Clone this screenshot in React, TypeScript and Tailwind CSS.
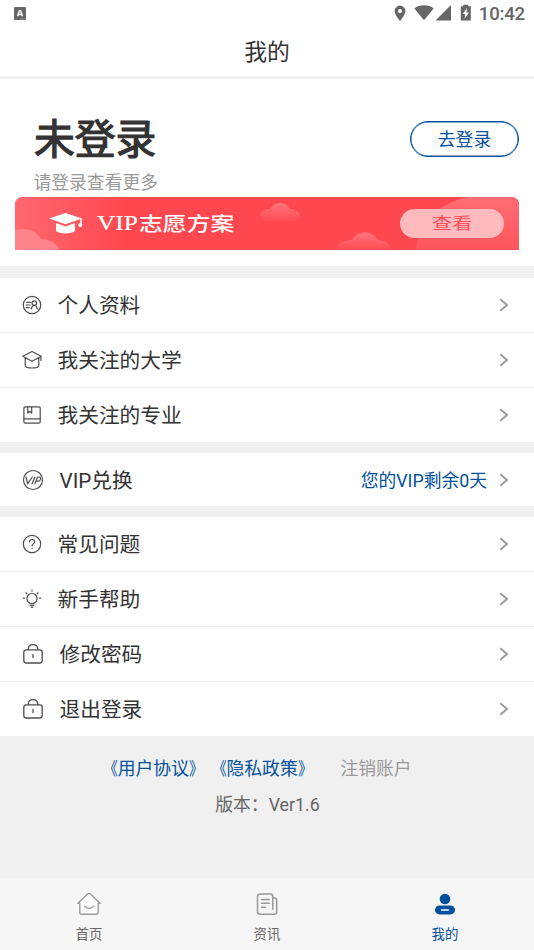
import type { ReactNode } from 'react';

const iconProps = {
  fill: 'none',
  stroke: '#4d4d4d',
  strokeWidth: 1.2,
  strokeLinecap: 'round' as const,
  strokeLinejoin: 'round' as const,
};

function ProfileIcon() {
  return (
    <svg width="20" height="20" viewBox="0 0 20 20" {...iconProps}>
      <circle cx="10" cy="10" r="8.7" />
      <path d="M4.8 7.4h3.8M4.2 10h3.8M4.2 12.6h3M9.4 13.8c.2-2.200 1.300-3.300 2.900-3.300s2.700 1.100 2.900 3.300" />
      <circle cx="12.300" cy="8.100" r="2.300" />
    </svg>
  );
}

function CollegeIcon() {
  return (
    <svg width="20" height="20" viewBox="0 0 20 20" {...iconProps}>
      <path d="M.8 6.300 10 1.500l9.200 4.800L10 11.200zM3.200 8v7.200c0 1.500 3 2.800 6.800 2.800s6.800-1.300 6.800-2.800V8M18.900 6.500v4" />
    </svg>
  );
}

function MajorIcon() {
  return (
    <svg width="20" height="20" viewBox="0 0 20 20" {...iconProps}>
      <rect x="1.900" y="1.800" width="16.300" height="16.300" rx="1.200" />
      <path d="M2 13.900h16M5.700 2v6l2-1.700 2 1.700V2" />
    </svg>
  );
}

function VipIcon() {
  return (
    <svg width="22" height="22" viewBox="0 0 22 22" {...iconProps}>
      <circle cx="11" cy="11" r="9.500" />
      <path d="m4 8 1.600 6.800L10.300 8M12.800 8l-2.700 6.800M12.900 14.800 15.600 8h1.500c2.500 0 1.700 4.200-.9 4.200h-2" />
    </svg>
  );
}

function QuestionIcon() {
  return (
    <svg width="20" height="20" viewBox="0 0 20 20" {...iconProps}>
      <circle cx="10" cy="10" r="8.700" />
      <path d="M7.500 8c0-1.500 1.100-2.500 2.600-2.500s2.500 1 2.500 2.300c0 1.800-2.500 1.900-2.500 4M10.100 14v.3" />
    </svg>
  );
}

function BulbIcon() {
  return (
    <svg width="20" height="20" viewBox="0 0 20 20" {...iconProps}>
      <circle cx="10" cy="9.600" r="5.100" />
      <path d="M8 16.300h4M9.300 18.300h1.400M10 1.200v.9M1.300 9.200h1.100M17.600 9.200h1.100M3.900 3.800l.8.7M16.100 3.800l-.8.7" />
    </svg>
  );
}

function LockIcon() {
  return (
    <svg width="22" height="22" viewBox="0 0 22 22" {...iconProps} strokeWidth={1.3}>
      <rect x="1.800" y="6.800" width="18.400" height="13.200" rx="2.500" />
      <path d="M6.200 6.600C6.200 3.600 8.300 1.700 11 1.700s4.800 1.900 4.800 4.900M11 11.400v3.200" />
    </svg>
  );
}

function Chevron() {
  return (
    <svg className="shrink-0" width="10" height="14" viewBox="0 0 10 14" fill="none" stroke="#9a9a9a" strokeWidth="1.900">
      <path d="m1.300 1.300 6.700 5.700-6.700 5.700" />
    </svg>
  );
}

type RowProps = {
  icon: ReactNode;
  label: string;
  wide?: boolean;
  extra?: string;
};

function Row({ icon, label, wide, extra }: RowProps) {
  return (
    <div className="box-content flex h-[54px] items-center pr-[25px] pl-[22px]">
      <span className={wide ? 'w-[37.500px]' : 'w-[35.500px]'}>{icon}</span>
      <span className="flex-1 pt-[2px] text-[20.700px] leading-[30px] text-[#333]">{label}</span>
      {extra && <span className="mr-[12px] pt-[2px] text-[17.800px] text-[#00509e]">{extra}</span>}
      <Chevron />
    </div>
  );
}

function StatusBar() {
  return (
    <div className="flex h-[27px] items-center pr-[9px] pl-[14px] text-[#666]">
      <svg width="12" height="13" viewBox="0 0 12 13">
        <rect width="12" height="13" rx="1" fill="#666" />
        <path d="M3.500 9.300 5.400 3.700h1.200l1.900 5.600M4.300 7.500h3.400" fill="none" stroke="#fff" strokeWidth="1.400" />
        <path d="M6.500 11.900h4.500" stroke="#bbb" strokeWidth=".8" strokeDasharray="1 .6" />
      </svg>
      <div className="flex-1" />
      <svg className="mb-px" width="80" height="18" viewBox="0 0 80 18" fill="#666">
        <path fillRule="evenodd" d="M8 1.600a5.400 5.400 0 0 0-5.400 5.400C2.600 11 8 17 8 17s5.400-6 5.400-10A5.400 5.400 0 0 0 8 1.600m0 3.500a2 2 0 1 1 0 4 2 2 0 0 1 0-4" />
        <path d="M22.300 4.500C27.500.100 36.600.100 41.700 4.500L32 16.200z" />
        <path d="M59 1v15.600H43.500z" />
        <path fillRule="evenodd" d="M71.300.700h4.900v1.600h2.600v14.300h-10V2.300h2.500zM75 4l-4.300 6h2.600l-.8 4.800 4.600-6.400h-2.700z" />
      </svg>
      <span className="ml-[7px] text-[18.600px] leading-[26px] font-medium tracking-[-0.200px]">10:42</span>
    </div>
  );
}

function VipBanner() {
  return (
    <div className="relative mx-[15px] flex h-[53px] items-center overflow-hidden rounded-t-[8px] bg-[#ff474f]">
      <svg className="absolute inset-0" width="504" height="53" viewBox="0 0 504 53">
        <defs>
          <linearGradient id="bg" x1="0" x2="1">
            <stop offset="0" stopColor="#ff6870" />
            <stop offset=".22" stopColor="#ff474f" />
          </linearGradient>
          <linearGradient id="cloud" x1="0" y1="0" x2="0" y2="1">
            <stop offset="0" stopColor="#ff757c" />
            <stop offset="1" stopColor="#ff4b53" />
          </linearGradient>
          <linearGradient id="arc" x1="0" y1="0" x2="0" y2="1">
            <stop offset="0" stopColor="#ff6d74" />
            <stop offset="1" stopColor="#ff555d" />
          </linearGradient>
        </defs>
        <rect width="504" height="53" fill="url(#bg)" />
        <path d="M0 33c10-3 22 0 26 9 9 0 17 5 18 11H0z" fill="#ff858b" />
        <path d="M250 24c-7-2-7-12 5-12 4-8 17-8 20 0 9 0 13 8 7 12z" fill="url(#cloud)" />
        <path d="M321 53c2-8 9-10 16-10 5-10 21-10 26 0 7 0 13 4 13 10z" fill="url(#cloud)" />
        <path d="M401 53c2-27 22-46 51-53h52v53z" fill="url(#arc)" />
        <path d="M34 21.500 50.500 16 67 21.500 50.500 27.300z" fill="#fff" />
        <path d="M41 26 50.500 29.500 60 26v8c-4 3.300-15 3.300-19 0z" fill="#fff" />
        <path d="M66 21.300v6.500" stroke="#fff" strokeWidth="1.500" />
        <circle cx="65.300" cy="28" r="2" fill="#fff" />
      </svg>
      <span className="relative ml-[82px] flex w-[139px] items-center whitespace-nowrap text-white">
        <span className="w-[42px] origin-left scale-x-[1.210] pt-[1px] font-[Liberation_Serif] text-[21px] [-webkit-text-stroke:0.200px_white]">VIP</span>
        <span className="origin-left scale-x-[1.270] pt-[3px] text-[18.800px] font-medium">志愿方案</span>
      </span>
      <button className="relative ml-auto mr-[15px] h-[29px] w-[104px] rounded-full bg-[#ffbabe] text-[#ff5059]">
        <span className="inline-block scale-x-[1.240] text-[16.300px] leading-[29px]">查看</span>
      </button>
    </div>
  );
}

// Book-title brackets are drawn a little narrower than the font's full-width ones
function DocLink({ title }: { title: string }) {
  return (
    <a href="#" className="flex">
      <span className="origin-right scale-x-[0.820]">《</span>
      {title}
      <span className="origin-left scale-x-[0.820]">》</span>
    </a>
  );
}

function TabBar() {
  return (
    <nav className="flex h-[72px] bg-[#f6f6f6] pt-[13px] text-[13.400px] leading-[20px] text-[#666]">
      <div className="flex flex-1 flex-col items-center gap-[8px]">
        <svg width="26" height="26" viewBox="0 0 26 26" fill="none" stroke="#999" strokeWidth="1.400" strokeLinejoin="round" strokeLinecap="round">
          <path d="M1.900 12.200 11.600 3c.8-.7 2-.7 2.800 0l9.700 9.200h-1.900v9.300c0 1-.7 1.700-1.700 1.700h-15c-1 0-1.700-.7-1.700-1.700v-9.300z" fill="#fff" />
          <path d="M8.500 15c2 3.300 7 3.300 9 0" />
        </svg>
        <span>首页</span>
      </div>
      <div className="flex flex-1 flex-col items-center gap-[8px]">
        <svg width="26" height="26" viewBox="0 0 26 26" fill="none" stroke="#999" strokeWidth="1.500" strokeLinecap="round">
          <path d="M18.800 7h1.300c1.500 0 2.600 1 2.600 2.500v11.200c0 1.400-1 2.500-2.500 2.500H6c-1.500 0-2.500-1-2.500-2.500V5.500C3.500 4 4.500 3 6 3h10.300c1.500 0 2.500 1 2.500 2.500v12.700" />
          <path d="M7.600 8.400h7.600M7.600 12.300h7.600M7.600 16.200h4" />
        </svg>
        <span>资讯</span>
      </div>
      <div className="flex flex-1 flex-col items-center gap-[8px] text-[#00509e]">
        <svg width="26" height="26" viewBox="0 0 26 26" fill="#00509e">
          <circle cx="13" cy="8" r="5.300" />
          <rect x="3" y="14.400" width="20" height="9" rx="4.500" />
          <path d="M9.500 19h7" stroke="#fff" strokeWidth="1.400" strokeLinecap="round" />
        </svg>
        <span>我的</span>
      </div>
    </nav>
  );
}

export default function App() {
  return (
    <div className="flex h-[950px] w-[534px] flex-col overflow-hidden bg-[#f0f0f0] font-[Roboto,'Noto_Sans_CJK_SC',sans-serif]">
      <header className="h-[76px] bg-white">
        <StatusBar />
        <h1 className="pt-[1px] text-center text-[22.800px] leading-[49px] text-[#333]">我的</h1>
      </header>

      <section className="mt-[3px] h-[187px] bg-white">
        <div className="flex h-[118px] items-start justify-between pr-[15px] pl-[34px]">
          <div>
            <h2 className="mt-[31px] text-[40.800px] leading-[60px] text-[#333] [-webkit-text-stroke:1.200px_#333]">未登录</h2>
            <p className="-ml-[0.500px] -mt-[1px] text-[17.800px] leading-[27px] text-[#999]">请登录查看更多</p>
          </div>
          <button className="mt-[42px] h-[36px] w-[109px] rounded-full border border-[#00509e] pt-[2px] text-[17.800px] leading-[32px] text-[#00509e] shadow-[inset_0_0_0_0.500px_#00509e]">
            去登录
          </button>
        </div>
        <VipBanner />
      </section>

      <section className="mt-[12px] divide-y divide-[#f0f0f0] bg-white">
        <Row icon={<ProfileIcon />} label="个人资料" />
        <Row icon={<CollegeIcon />} label="我关注的大学" />
        <Row icon={<MajorIcon />} label="我关注的专业" />
      </section>

      <section className="mt-[11px] h-[53px] bg-white">
        <Row icon={<VipIcon />} label="VIP兑换" extra="您的VIP剩余0天" wide />
      </section>

      <section className="mt-[11px] divide-y divide-[#f0f0f0] bg-white">
        <Row icon={<QuestionIcon />} label="常见问题" />
        <Row icon={<BulbIcon />} label="新手帮助" />
        <Row icon={<LockIcon />} label="修改密码" wide />
        <Row icon={<LockIcon />} label="退出登录" wide />
      </section>

      <footer className="flex-1 pt-[19px] text-[17.800px] leading-[27px]">
        <div className="flex pl-[100px] text-[#00509e]">
          <DocLink title="用户协议" />
          <span className="ml-[2px]">
            <DocLink title="隐私政策" />
          </span>
          <span className="ml-[25px] text-[#999]">注销账户</span>
        </div>
        <p className="mt-[9px] pl-px text-center text-[#666]">版本：Ver1.6</p>
      </footer>

      <TabBar />
    </div>
  );
}
